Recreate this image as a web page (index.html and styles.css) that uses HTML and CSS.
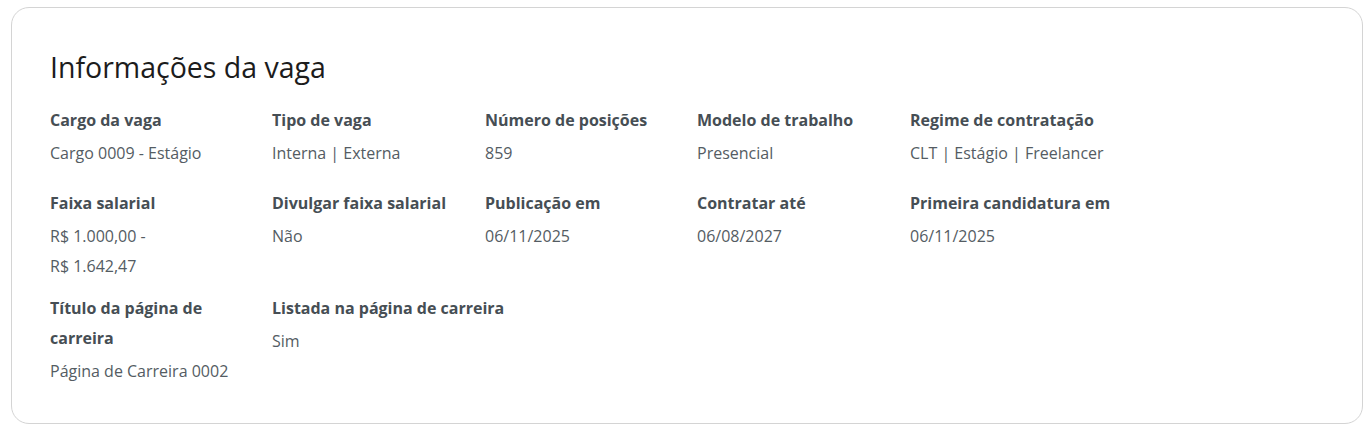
FILE: index.html
```html
<!DOCTYPE html>
<html lang="pt-BR">
<head>
<meta charset="utf-8">
<title>Informações da vaga</title>
<link rel="stylesheet" href="styles.css">
</head>
<body>
<div class="page">
  <section class="card">
    <h2 class="card-title">Informações da vaga</h2>
    <div class="info-grid">
      <div class="item row-short">
        <div class="label">Cargo da vaga</div>
        <div class="value">Cargo 0009 - Estágio</div>
      </div>
      <div class="item row-short">
        <div class="label">Tipo de vaga</div>
        <div class="value">Interna | Externa</div>
      </div>
      <div class="item row-short">
        <div class="label">Número de posições</div>
        <div class="value">859</div>
      </div>
      <div class="item row-short">
        <div class="label">Modelo de trabalho</div>
        <div class="value">Presencial</div>
      </div>
      <div class="item row-short">
        <div class="label">Regime de contratação</div>
        <div class="value">CLT | Estágio | Freelancer</div>
      </div>

      <div class="item">
        <div class="label">Faixa salarial</div>
        <div class="value">R$ 1.000,00 -<br>R$ 1.642,47</div>
      </div>
      <div class="item">
        <div class="label">Divulgar faixa salarial</div>
        <div class="value">Não</div>
      </div>
      <div class="item">
        <div class="label">Publicação em</div>
        <div class="value">06/11/2025</div>
      </div>
      <div class="item">
        <div class="label">Contratar até</div>
        <div class="value">06/08/2027</div>
      </div>
      <div class="item">
        <div class="label">Primeira candidatura em</div>
        <div class="value">06/11/2025</div>
      </div>

      <div class="item">
        <div class="label">Título da página de carreira</div>
        <div class="value">Página de Carreira 0002</div>
      </div>
      <div class="item">
        <div class="label nowrap">Listada na página de carreira</div>
        <div class="value">Sim</div>
      </div>
    </div>
  </section>
</div>
</body>
</html>
```

FILE: styles.css
```css
html, body {
  margin: 0;
  padding: 0;
  background: #ffffff;
}

body {
  font-family: "Open Sans", "Noto Sans", sans-serif;
  color: #575f66;
}

.page {
  padding: 7px 9px 10px 11px;
}

.card {
  box-sizing: border-box;
  height: 417px;
  border: 1px solid #d4d4d4;
  border-radius: 18px;
  background: #ffffff;
  padding: 42px 38px 0 38px;
}

.card-title {
  margin: 0;
  font-size: 28.5px;
  line-height: 34px;
  font-weight: 400;
  color: #1c1c1c;
}

.info-grid {
  margin-top: 21px;
  display: grid;
  grid-template-columns: 210px 201px 200px 201px 1fr;
  column-gap: 12px;
}

.item {
  box-sizing: border-box;
  padding-bottom: 12px;
}

.item.row-short {
  min-height: 83px;
}

.label {
  font-size: 16px;
  line-height: 30px;
  font-weight: 700;
  color: #464e54;
}

.label.nowrap {
  white-space: nowrap;
}

.value {
  margin-top: 3px;
  font-size: 16px;
  line-height: 30px;
  font-weight: 400;
  color: #545c63;
}
```
